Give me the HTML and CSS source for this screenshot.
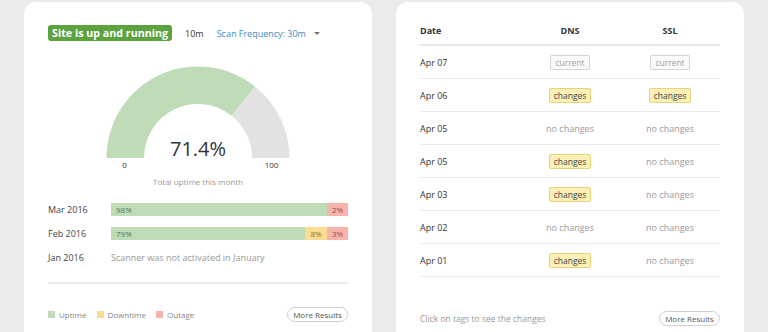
FILE: index.html
```html
<!DOCTYPE html>
<html>
<head>
<meta charset="utf-8">
<link rel="stylesheet" href="styles.css">
</head>
<body>
<div class="page">
  <section class="card">
    <div class="status">
      <span class="badge">Site is up and running</span>
      <span class="ago">10m</span>
      <span class="freq">Scan Frequency: 30m</span>
      <span class="caret"></span>
    </div>
    <div class="gauge">
      <div class="gauge-art">
        <svg width="184" height="92" viewBox="0 0 184 92">
          <path d="M0.5 92 A91.5 91.5 0 0 1 148.96 20.4 L125.6 49.7 A54 54 0 0 0 38 92 Z" fill="#bfdbb8"/>
          <path d="M148.96 20.4 A91.5 91.5 0 0 1 183.5 92 L146 92 A54 54 0 0 0 125.6 49.7 Z" fill="#e2e2e2"/>
        </svg>
        <span class="gauge-value">71.4%</span>
      </div>
      <div class="gauge-scale"><span>0</span><span>100</span></div>
      <div class="gauge-caption">Total uptime this month</div>
    </div>
    <div class="months">
      <div class="month">
        <span class="month-name">Mar 2016</span>
        <div class="bar">
          <span class="seg up">98%</span>
          <span class="seg out">2%</span>
        </div>
      </div>
      <div class="month">
        <span class="month-name">Feb 2016</span>
        <div class="bar">
          <span class="seg up">79%</span>
          <span class="seg down">8%</span>
          <span class="seg out">3%</span>
        </div>
      </div>
      <div class="month">
        <span class="month-name">Jan 2016</span>
        <span class="month-note">Scanner was not activated in January</span>
      </div>
    </div>
    <div class="divider"></div>
    <div class="footer">
      <div class="legend">
        <span class="key"><i class="sw sw-up"></i>Uptime</span>
        <span class="key"><i class="sw sw-down"></i>Downtime</span>
        <span class="key"><i class="sw sw-out"></i>Outage</span>
      </div>
      <button class="more">More Results</button>
    </div>
  </section>
  <section class="card card-table">
    <div class="table">
      <div class="trow thead"><span>Date</span><span>DNS</span><span>SSL</span></div>
      <div class="trow"><span>Apr 07</span><span><em class="tag cur">current</em></span><span><em class="tag cur">current</em></span></div>
      <div class="trow"><span>Apr 06</span><span><em class="tag chg">changes</em></span><span><em class="tag chg">changes</em></span></div>
      <div class="trow"><span>Apr 05</span><span class="none">no changes</span><span class="none">no changes</span></div>
      <div class="trow"><span>Apr 05</span><span><em class="tag chg">changes</em></span><span class="none">no changes</span></div>
      <div class="trow"><span>Apr 03</span><span><em class="tag chg">changes</em></span><span class="none">no changes</span></div>
      <div class="trow"><span>Apr 02</span><span class="none">no changes</span><span class="none">no changes</span></div>
      <div class="trow"><span>Apr 01</span><span><em class="tag chg">changes</em></span><span class="none">no changes</span></div>
    </div>
    <div class="footer tfoot">
      <span class="hint">Click on tags to see the changes</span>
      <button class="more">More Results</button>
    </div>
  </section>
</div>
</body>
</html>
```
FILE: styles.css
```css
html, body {
  margin: 0;
  padding: 0;
  height: 332px;
  overflow: hidden;
  background: #ebebeb;
  font-family: "Open Sans", "Liberation Sans", sans-serif;
  color: #333;
}
.page {
  display: flex;
  gap: 24px;
  padding: 2px 0 0 24px;
}
.card {
  width: 348px;
  height: 330px;
  box-sizing: border-box;
  background: #fff;
  border-radius: 12px 12px 0 0;
  padding: 23px 24px 0;
  display: flex;
  flex-direction: column;
}
.card-table {
  padding-top: 21px;
}
.status {
  display: flex;
  align-items: center;
  height: 16px;
  font-size: 9px;
}
.badge {
  background: #5ca23f;
  color: #fff;
  font-weight: 700;
  font-size: 10.7px;
  line-height: 16px;
  padding: 0 4px;
  border-radius: 3px;
}
.ago {
  margin-left: 13px;
  color: #333;
}
.freq {
  margin-left: 13px;
  color: #3a8dbd;
}
.caret {
  margin-left: 8px;
  width: 0;
  height: 0;
  border-left: 3px solid transparent;
  border-right: 3px solid transparent;
  border-top: 3px solid #777;
}
.gauge {
  display: flex;
  flex-direction: column;
  align-items: center;
  margin-top: 25px;
}
.gauge-art {
  position: relative;
  width: 184px;
  height: 92px;
}
.gauge-art svg {
  display: block;
}
.gauge-value {
  position: absolute;
  left: 0;
  right: 0;
  bottom: -3px;
  text-align: center;
  font-size: 20px;
  line-height: 24px;
  color: #333;
}
.gauge-scale {
  width: 184px;
  display: flex;
  justify-content: space-between;
  font-size: 8px;
  line-height: 12px;
  color: #333;
  margin-top: 1px;
}
.gauge-scale span {
  width: 37px;
  text-align: center;
}
.gauge-caption {
  margin-top: 5px;
  font-size: 8px;
  line-height: 12px;
  color: #999;
}
.months {
  margin-top: 15px;
  display: flex;
  flex-direction: column;
  gap: 11px;
}
.month {
  display: flex;
  align-items: center;
  height: 13px;
}
.month-name {
  width: 63px;
  font-size: 9px;
  color: #444;
}
.month-note {
  font-size: 9px;
  color: #999;
}
.bar {
  flex: 1;
  display: flex;
  height: 13px;
}
.seg {
  font-size: 8px;
  line-height: 13px;
  color: #666;
}
.seg.up {
  flex: 1;
  background: #bfdbb8;
  padding-left: 5px;
  color: #5b7a55;
}
.seg.down {
  width: 22px;
  text-align: center;
  background: #fcdc90;
  color: #8a7540;
}
.seg.out {
  width: 21px;
  text-align: center;
  background: #f6b4aa;
  color: #8a5550;
}
.divider {
  margin-top: 18px;
  height: 2px;
  background: #ececec;
}
.footer {
  margin-top: 22px;
  display: flex;
  align-items: center;
  justify-content: space-between;
  height: 16px;
}
.legend {
  display: flex;
  gap: 10px;
}
.key {
  display: flex;
  align-items: center;
  gap: 4px;
  font-size: 8px;
  color: #888;
}
.sw {
  width: 7px;
  height: 7px;
}
.sw-up { background: #bfdbb8; }
.sw-down { background: #fcdc90; }
.sw-out { background: #f6b4aa; }
.more {
  width: 61px;
  height: 15px;
  padding: 0;
  border: 1px solid #cfcfcf;
  border-radius: 8px;
  background: #fff;
  font-family: inherit;
  font-size: 8px;
  color: #555;
}
.table {
  display: flex;
  flex-direction: column;
}
.trow {
  display: grid;
  grid-template-columns: 100px 100px 100px;
  align-items: center;
  height: 32px;
  border-bottom: 1px solid #ececec;
  font-size: 9px;
  color: #333;
}
.trow span:nth-child(n+2) {
  text-align: center;
}
.trow.thead {
  height: 21px;
  align-items: start;
  line-height: 16px;
  font-weight: 700;
  border-bottom: 2px solid #e8e8e8;
}
.none {
  color: #9a9a9a;
}
.tag {
  display: inline-block;
  font-style: normal;
  font-size: 8.5px;
  line-height: 13px;
  padding: 0 4px;
  border-radius: 2px;
}
.tag.cur {
  border: 1px solid #d4d4d4;
  color: #a0a0a0;
  background: #fafafa;
}
.tag.chg {
  border: 1px solid #e8d27a;
  background: #fcf0b6;
  color: #444;
}
.tfoot {
  margin-top: 33px;
}
.hint {
  font-size: 8.5px;
  color: #999;
}
```
